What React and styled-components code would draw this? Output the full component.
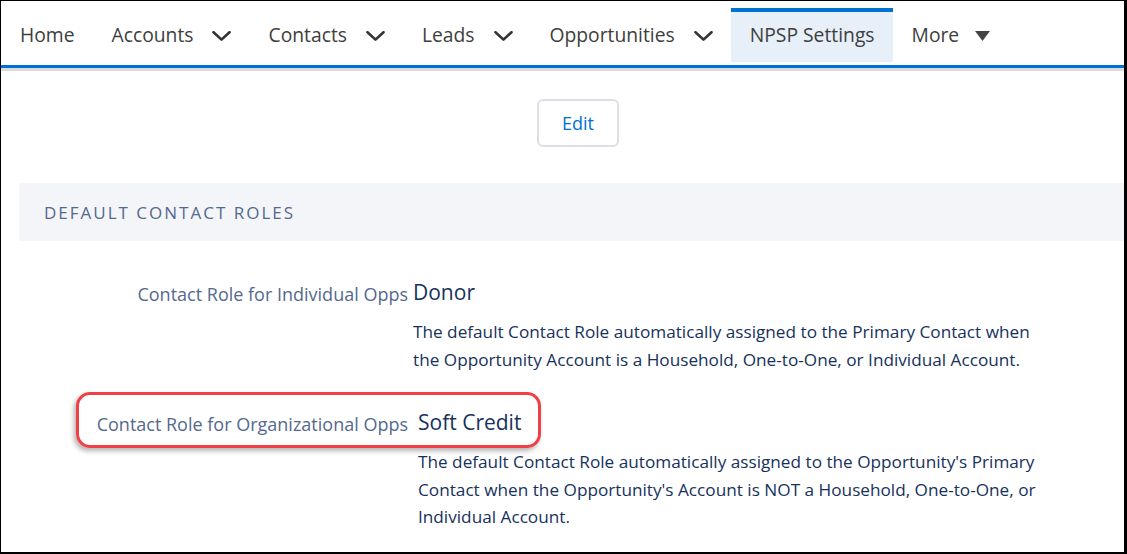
import React from 'react';
import styled, { createGlobalStyle } from 'styled-components';

const GlobalStyle = createGlobalStyle`
  * {
    box-sizing: border-box;
  }
  body {
    margin: 0;
    background: #fff;
    font-family: "Open Sans", "Noto Sans", Arial, sans-serif;
  }
`;

const navItems = [
  { label: 'Home' },
  { label: 'Accounts', menu: true },
  { label: 'Contacts', menu: true },
  { label: 'Leads', menu: true },
  { label: 'Opportunities', menu: true },
  { label: 'NPSP Settings', active: true },
  { label: 'More', more: true }
];

function Chevron() {
  return (
    <ChevronIcon viewBox="0 0 19 10" width="19" height="10">
      <polyline
        points="1.5,1.2 9.5,8.6 17.5,1.2"
        fill="none"
        stroke="#333"
        strokeWidth="2.6"
        strokeLinecap="round"
        strokeLinejoin="round"
      />
    </ChevronIcon>
  );
}

function Caret() {
  return (
    <CaretIcon viewBox="0 0 15 10" width="15" height="10">
      <polygon points="0,0 15,0 7.5,10" fill="#444" />
    </CaretIcon>
  );
}

function App() {
  const navList = navItems.map(item => (
    <NavItem key={item.label} active={item.active}>
      <NavLabel>{item.label}</NavLabel>
      {item.menu && <Chevron />}
      {item.more && <Caret />}
    </NavItem>
  ));

  return (
    <>
      <GlobalStyle />
      <Frame>
        <Nav>{navList}</Nav>
        <Main>
          <ButtonRow>
            <EditButton>Edit</EditButton>
          </ButtonRow>
          <SectionHeader>Default Contact Roles</SectionHeader>

          <Row top={37}>
            <Label>Contact Role for Individual Opps</Label>
            <Field offset={5}>
              <Value>Donor</Value>
              <Help>
                The default Contact Role automatically assigned to the Primary
                Contact when the Opportunity Account is a Household, One-to-One,
                or Individual Account.
              </Help>
            </Field>
          </Row>

          <Row top={35}>
            <Highlight />
            <Label>Contact Role for Organizational Opps</Label>
            <Field offset={10}>
              <Value>Soft Credit</Value>
              <Help>
                The default Contact Role automatically assigned to the
                Opportunity's Primary Contact when the Opportunity's Account is
                NOT a Household, One-to-One, or Individual Account.
              </Help>
            </Field>
          </Row>
        </Main>
      </Frame>
    </>
  );
}

const Frame = styled.div`
  width: 1127px;
  height: 554px;
  border: 1px solid #000;
  border-right-width: 3px;
  border-bottom-width: 2px;
  overflow: hidden;
  background: #fff;
`;

const Nav = styled.nav`
  display: flex;
  align-items: stretch;
  padding-top: 7px;
  height: 67px;
  border-bottom: 3px solid #0070d2;
  box-shadow: 0 3px 0 #dcdcdc;
`;

const NavItem = styled.div`
  display: flex;
  align-items: center;
  padding: 0 18px 0 19px;
  height: 54px;
  color: #3e3e3c;
  font-size: 19.3px;
  border-top: 4px solid ${props => (props.active ? '#0070d2' : 'transparent')};
  background: ${props => (props.active ? '#e7eff9' : 'transparent')};
`;

const NavLabel = styled.span`
  line-height: 1;
  margin-top: -5px;
`;

const ChevronIcon = styled.svg`
  margin-left: 19px;
  margin-top: -2px;
`;

const CaretIcon = styled.svg`
  margin-left: 16px;
  margin-top: -2px;
`;

const Main = styled.main`
  padding-top: 31px;
`;

const ButtonRow = styled.div`
  display: flex;
  padding-left: 536px;
`;

const EditButton = styled.button`
  width: 82px;
  height: 48px;
  border: 2px solid #dcdfe6;
  border-radius: 6px;
  background: #fff;
  color: #0070d2;
  font-family: "Open Sans", "Noto Sans", Arial, sans-serif;
  font-size: 18px;
  padding: 0;
`;

const SectionHeader = styled.h2`
  display: flex;
  align-items: center;
  height: 58px;
  margin: 36px 0 0 18px;
  padding-left: 25px;
  background: #f3f5f9;
  color: #54698d;
  font-size: 17px;
  font-weight: 400;
  letter-spacing: 2px;
  text-transform: uppercase;
`;

const Row = styled.div`
  position: relative;
  display: flex;
  align-items: flex-start;
  margin-top: ${props => props.top}px;
`;

const Label = styled.div`
  flex: 0 0 407px;
  text-align: right;
  color: #54698d;
  font-size: 18px;
  line-height: 28px;
  padding-top: 2px;
`;

const Field = styled.div`
  margin-left: ${props => props.offset}px;
  width: 645px;
`;

const Value = styled.div`
  color: #16325c;
  font-size: 21px;
  line-height: 28px;
`;

const Help = styled.p`
  margin: 12px 0 0;
  color: #16325c;
  font-size: 17.2px;
  line-height: 27.5px;
`;

const Highlight = styled.div`
  position: absolute;
  left: 75px;
  top: -16px;
  width: 465px;
  height: 56px;
  border: 3px solid #ef4046;
  border-radius: 14px;
  box-shadow: -2px 3px 5px rgba(0, 0, 0, 0.3);
  pointer-events: none;
`;

export default App;
